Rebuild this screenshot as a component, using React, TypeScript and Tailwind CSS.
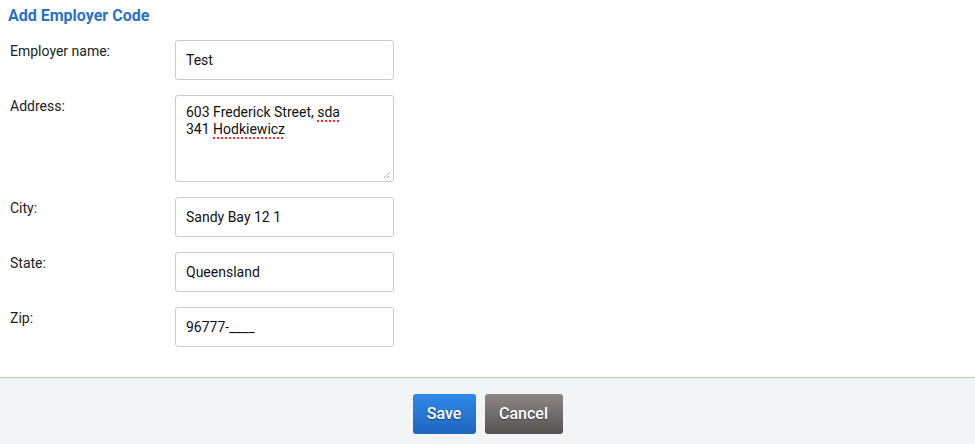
import React from "react";

const fieldClass =
  "w-[219px] h-10 border border-[#cccccc] rounded-[3px] bg-white px-[10px] text-[14px] text-[#111] outline-none font-['Roboto']";

const Field = ({ label, value }: { label: string; value: string }) => (
  <div className="flex">
    <label className="w-[165px] pt-px text-[14px] leading-5 text-[#222]">{label}</label>
    <input className={fieldClass} value={value} readOnly />
  </div>
);

const Misspelt = ({ children }: { children: React.ReactNode }) => (
  <span className="underline decoration-dotted decoration-red-500 decoration-2 underline-offset-[3px] [text-decoration-color:#e23a3a]">
    {children}
  </span>
);

export default function App() {
  return (
    <div className="w-[975px] h-[444px] bg-white font-['Roboto',sans-serif] flex flex-col overflow-hidden">
      {/* Form */}
      <div className="pt-[6px] pb-[30px]">
        <h2 className="pl-2 text-[16px] leading-5 font-bold text-[#2a72c8]">Add Employer Code</h2>

        <div className="mt-[14px] pl-[10px] flex flex-col gap-[15px]">
          <Field label="Employer name:" value="Test" />

          <div className="flex">
            <label className="w-[165px] pt-px text-[14px] leading-5 text-[#222]">Address:</label>
            <div className="relative w-[219px] h-[87px] border border-[#cccccc] rounded-[3px] bg-white px-[10px] pt-2 text-[14px] leading-[17px] text-[#111]">
              <div>
                603 Frederick Street, <Misspelt>sda</Misspelt>
              </div>
              <div>
                341 <Misspelt>Hodkiewicz</Misspelt>
              </div>
              {/* resize grip */}
              <svg className="absolute right-[2px] bottom-[2px]" width="8" height="8" viewBox="0 0 8 8">
                <path d="M1 7L7 1M4 7L7 4" stroke="#777" strokeWidth="1" strokeDasharray="1 1" />
              </svg>
            </div>
          </div>

          <Field label="City:" value="Sandy Bay 12 1" />
          <Field label="State:" value="Queensland" />
          <Field label="Zip:" value="96777-____" />
        </div>
      </div>

      {/* Footer */}
      <div className="flex-1 border-t border-[#b9ccb5] bg-[#f3f4f6] pt-4 flex justify-center gap-[9px]">
        <button className="h-10 w-[63px] rounded-[3px] bg-gradient-to-b from-[#3089e8] to-[#1f65bf] text-white text-[16px] font-medium [text-shadow:0_1px_1px_rgba(0,0,0,0.45)]">
          Save
        </button>
        <button className="h-10 w-[78px] rounded-[3px] bg-gradient-to-b from-[#8c8786] to-[#575352] text-white text-[16px] font-medium [text-shadow:0_1px_1px_rgba(0,0,0,0.45)]">
          Cancel
        </button>
      </div>
    </div>
  );
}
